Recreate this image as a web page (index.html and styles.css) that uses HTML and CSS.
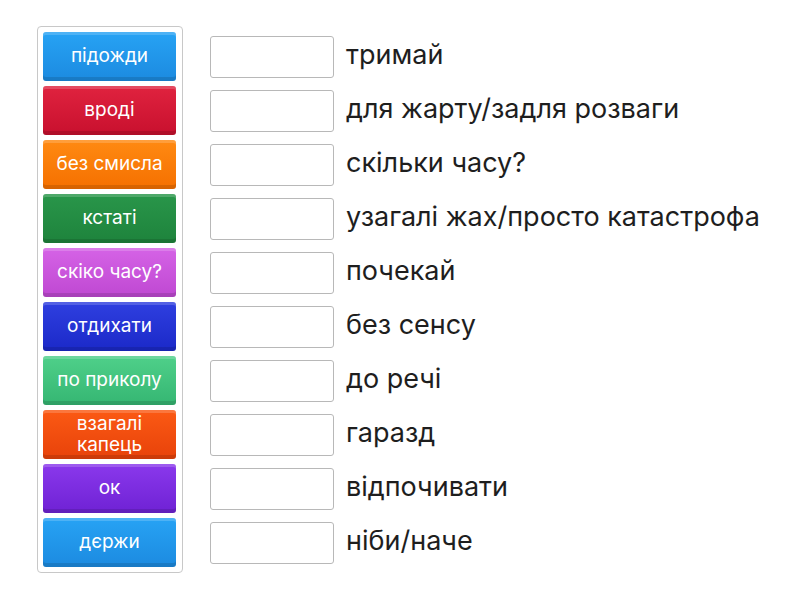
FILE: index.html
```html
<!DOCTYPE html>
<html>
<head>
<meta charset="utf-8">
<link rel="stylesheet" href="styles.css">
</head>
<body>
<div class="page">
  <div class="bank">
    <div class="tile c-blue">підожди</div>
    <div class="tile c-red">вроді</div>
    <div class="tile c-orange">без смисла</div>
    <div class="tile c-green">кстаті</div>
    <div class="tile c-pink">скіко часу?</div>
    <div class="tile c-indigo">отдихати</div>
    <div class="tile c-mint">по приколу</div>
    <div class="tile c-redorange">взагалі<br>капець</div>
    <div class="tile c-purple">ок</div>
    <div class="tile c-blue">дєржи</div>
  </div>
  <div class="rows">
    <div class="row"><div class="slot"></div><div class="label">тримай</div></div>
    <div class="row"><div class="slot"></div><div class="label">для жарту/задля розваги</div></div>
    <div class="row"><div class="slot"></div><div class="label">скільки часу?</div></div>
    <div class="row"><div class="slot"></div><div class="label">узагалі жах/просто катастрофа</div></div>
    <div class="row"><div class="slot"></div><div class="label">почекай</div></div>
    <div class="row"><div class="slot"></div><div class="label">без сенсу</div></div>
    <div class="row"><div class="slot"></div><div class="label">до речі</div></div>
    <div class="row"><div class="slot"></div><div class="label">гаразд</div></div>
    <div class="row"><div class="slot"></div><div class="label">відпочивати</div></div>
    <div class="row"><div class="slot"></div><div class="label">ніби/наче</div></div>
  </div>
</div>
</body>
</html>
```
FILE: styles.css
```css
html, body {
  margin: 0;
  padding: 0;
  background: #fff;
  font-family: Inter, Roboto, "Noto Sans", sans-serif;
}
.page {
  display: flex;
  align-items: flex-start;
  padding: 26px 0 0 37px;
  gap: 27px;
}
.bank {
  display: flex;
  flex-direction: column;
  gap: 5px;
  padding: 5px 6px 5px 5px;
  border: 1px solid #c8c8c8;
  border-radius: 4px;
}
.tile {
  width: 133px;
  height: 49px;
  box-sizing: border-box;
  border-radius: 3px;
  display: flex;
  align-items: center;
  justify-content: center;
  text-align: center;
  color: #fff;
  font-size: 19px;
  line-height: 21px;
  padding-bottom: 2px;
  box-shadow: inset 0 3px 0 rgba(255,255,255,0.18), inset 0 -4px 0 rgba(0,0,0,0.12);
}
.c-blue { background: linear-gradient(#27a3f4, #1c8ae0); }
.c-red { background: linear-gradient(#e0233f, #c8102e); }
.c-orange { background: linear-gradient(#ff8a12, #f57000); }
.c-green { background: linear-gradient(#29964a, #1e833c); }
.c-pink { background: linear-gradient(#d563e6, #bf48d2); }
.c-indigo { background: linear-gradient(#2f3fe0, #1b29c8); }
.c-mint { background: linear-gradient(#4fd08a, #35b672); }
.c-redorange { background: linear-gradient(#fb5a14, #e8420a); }
.c-purple { background: linear-gradient(#8a38ec, #6f22d4); }
.rows {
  display: flex;
  flex-direction: column;
  gap: 12px;
  padding-top: 10px;
}
.row {
  display: flex;
  align-items: center;
  gap: 12px;
  height: 42px;
}
.slot {
  width: 124px;
  height: 42px;
  box-sizing: border-box;
  border: 1px solid #b8b8b8;
  border-radius: 3px;
  background: #fff;
  flex: none;
}
.label {
  font-size: 27px;
  color: #1e1e1e;
  white-space: nowrap;
  padding-bottom: 6px;
}
```
